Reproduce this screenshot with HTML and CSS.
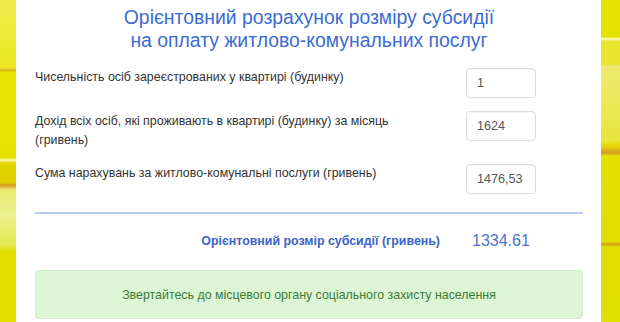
FILE: index.html
```html
<!DOCTYPE html>
<html lang="uk">
<head>
  <meta charset="UTF-8">
  <meta name="viewport" content="width=device-width, initial-scale=1.0">
  <title>Розрахунок субсидії</title>
  <link rel="stylesheet" href="styles.css">
</head>
<body>
  <div class="panel">
    <h1 class="title">Орієнтовний розрахунок розміру субсидії<br>на оплату житлово-комунальних послуг</h1>
    <form class="calc">
      <div class="row">
        <label class="row-label" for="persons">Чисельність осіб зареєстрованих у квартирі (будинку)</label>
        <div class="row-field"><input class="field" id="persons" type="text" value="1"></div>
      </div>
      <div class="row">
        <label class="row-label" for="income">Дохід всіх осіб, які проживають в квартирі (будинку) за місяць (гривень)</label>
        <div class="row-field"><input class="field" id="income" type="text" value="1624"></div>
      </div>
      <div class="row">
        <label class="row-label" for="charges">Сума нарахувань за житлово-комунальні послуги (гривень)</label>
        <div class="row-field"><input class="field" id="charges" type="text" value="1476,53"></div>
      </div>
    </form>
    <hr class="divider">
    <div class="result">
      <div class="result-label">Орієнтовний розмір субсидії (гривень)</div>
      <div class="result-value">1334.61</div>
    </div>
    <div class="alert">Звертайтесь до місцевого органу соціального захисту населення</div>
  </div>
</body>
</html>
```

FILE: styles.css
```css
html {
  background-color: #e4e000;
  background-image:
    linear-gradient(180deg, #f0ee50 0px, #ebe720 68px, #d8b020 70px, #e8e400 72px, #e8e200 158px, #fbf8c0 160px, #e2d400 163px, #e0cc00 183px, #d49a20 185px, #eaeb70 190px, #ecf090 215px, #e6e850 245px, #e2de00 252px, #e2de00 322px),
    linear-gradient(180deg, #e6e200 0px, #e6e200 37px, #fbf9d0 39px, #e8e430 41px, #e8e430 64px, #eeea70 66px, #e8e640 140px, #e4d800 146px, #d49a20 153px, #e4e000 156px, #e2de00 242px, #d49a20 244px, #e2de00 247px, #e2e000 322px);
  background-size: 16px 322px, 19px 322px;
  background-position: left top, right top;
  background-repeat: no-repeat;
}
body {
  margin: 0;
  font-family: "Liberation Sans", Arial, sans-serif;
  font-size: 12.4px;
  color: #333;
}
.panel {
  margin: 0 19px 0 16px;
  min-height: 322px;
  background-color: #fff;
  padding: 0 18px 0 19px;
  box-sizing: border-box;
}
.title {
  margin: 0;
  padding-top: 6px;
  font-size: 19.4px;
  font-weight: normal;
  line-height: 23px;
  text-align: center;
  color: #3b6bd2;
}
.calc {
  margin-top: 16px;
}
.row {
  display: grid;
  grid-template-columns: 431px 1fr;
  margin-bottom: 13px;
}
.row-label {
  padding-right: 48px;
  line-height: 19px;
}
.row-label[for="income"] {
  padding-top: 1px;
  margin-bottom: 1px;
}
.field {
  width: 70px;
  height: 30px;
  box-sizing: border-box;
  border: 1px solid #ddd;
  border-radius: 4px;
  padding: 0 10px;
  font-family: "Liberation Sans", Arial, sans-serif;
  font-size: 12.6px;
  color: #555;
  box-shadow: inset 0 1px 1px rgba(0, 0, 0, 0.04);
}
.divider {
  margin: 18px 0 0;
  border: 0;
  height: 2px;
  background-color: #bccaec;
}
.result {
  display: grid;
  grid-template-columns: 431px 1fr;
  align-items: center;
  margin-top: 18px;
}
.result-label {
  text-align: right;
  padding-right: 26px;
  font-weight: bold;
  color: #3a64c8;
}
.result-value {
  padding-left: 6px;
  font-size: 16px;
  color: #4a74d2;
}
.alert {
  margin-top: 20px;
  height: 49px;
  box-sizing: border-box;
  display: flex;
  align-items: center;
  justify-content: center;
  background-color: #dcf5d5;
  border: 1px solid #d2eecb;
  border-radius: 4px;
  color: #3c7a35;
}
```
